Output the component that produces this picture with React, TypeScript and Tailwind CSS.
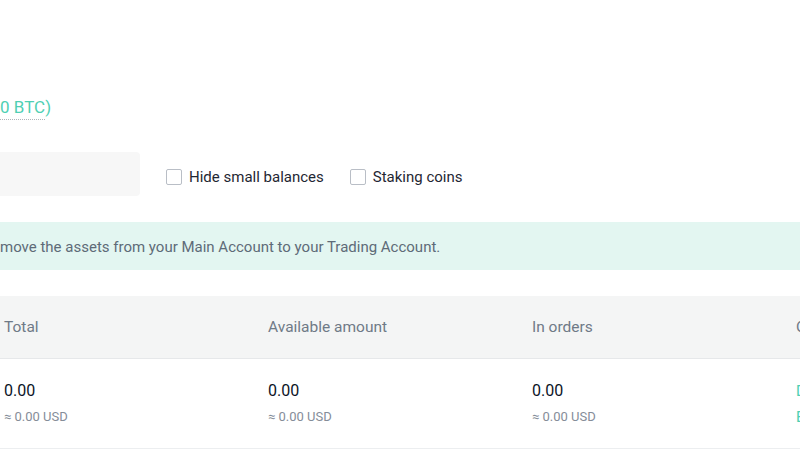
import React from "react";

const font = { fontFamily: "Roboto, 'Liberation Sans', sans-serif" };

function Checkbox({ label }: { label: string }) {
  return (
    <label className="flex items-center gap-[7px] cursor-pointer">
      <span className="w-4 h-4 rounded-[2px] border border-[#b9bec6] bg-white" />
      <span className="text-[15px] text-[#1f2733]">{label}</span>
    </label>
  );
}

export default function App() {
  const cols = ["Total", "Available amount", "In orders", "Operation"];
  return (
    <div className="w-[800px] h-[458px] overflow-hidden bg-white" style={font}>
      <div className="h-[96px]" />
      <div className="flex">
        <span className="text-[17px] leading-[22px] text-[#4fcfb3] border-b border-dotted border-[#b0b4ba] pb-[1px]">
          0 BTC
        </span>
        <span className="text-[17px] leading-[22px] text-[#4fcfb3]">)</span>
      </div>
      <div className="mt-[32px] flex items-center h-[44px]">
        <div className="w-[140px] h-[44px] bg-[#f7f7f7] rounded-r-[4px]" />
        <div className="ml-[26px] mt-[6px] flex items-center gap-[26px]">
          <Checkbox label="Hide small balances" />
          <Checkbox label="Staking coins" />
        </div>
      </div>
      <div className="mt-[26px] h-[48px] bg-[#e3f6f1] flex items-center pt-[3px] text-[15px] text-[#5e6b78]">
        move the assets from your Main Account to your Trading Account.
      </div>
      <div className="mt-[26px] h-[63px] bg-[#f4f5f5] border-b border-[#e6e8ea] flex items-center pl-[4px] pt-[2px]">
        {cols.map((c) => (
          <div key={c} className="w-[264px] shrink-0 whitespace-nowrap text-[15.5px] text-[#6f7a87]">
            {c}
          </div>
        ))}
      </div>
      <div className="h-[90px] border-b border-[#eceef0] flex items-start pl-[4px] pt-[21px]">
        {[0, 1, 2].map((i) => (
          <div key={i} className="w-[264px] shrink-0 flex flex-col">
            <span className="text-[16px] leading-[22px] text-[#0b1426]">0.00</span>
            <span className="mt-[6px] text-[13px] leading-[18px] text-[#858d99]">≈ 0.00 USD</span>
          </div>
        ))}
        <div className="w-[264px] shrink-0 flex flex-col text-[#4fcfb3] whitespace-nowrap">
          <span className="text-[15px] leading-[22px]">Deposit</span>
          <span className="mt-[6px] text-[15px] leading-[18px]">Buy</span>
        </div>
      </div>
    </div>
  );
}
